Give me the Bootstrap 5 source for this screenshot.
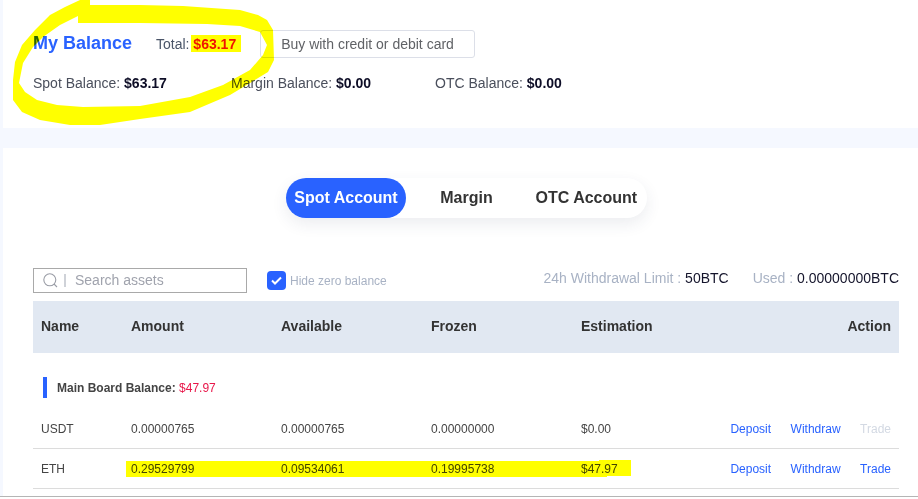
<!DOCTYPE html>
<html lang="en">
<head>
  <meta charset="UTF-8">
  <meta name="viewport" content="width=device-width, initial-scale=1.0">
  <title>My Balance</title>
  <link rel="stylesheet" href="https://cdn.jsdelivr.net/npm/bootstrap@5.3.2/dist/css/bootstrap.min.css">
  <style>
    html, body { height: 499px; overflow: hidden; }
    body { background: #f5f8ff; font-family: "Liberation Sans", Arial, sans-serif; color: #333; padding-left: 3px; position: relative; }
    .panel-top { background: #fff; height: 128px; padding: 30px 30px 0; }
    .panel-main { background: #fff; height: 348px; margin-top: 20px; padding: 30px 19px 0 30px; }
    .page-end { height: 3px; margin-left: -3px; background: #fff; border-top: 1px solid #b5b5b5; }
    .balance-title { color: #2962ff; font-size: 18px; font-weight: 700; line-height: 26px; margin: 0; width: 123px; }
    .total-label { font-size: 14px; color: #4a5568; width: 104px; padding-top: 4px; }
    .total-amount { color: #f01414; font-weight: 700; }
    .buy-btn { width: 215px; height: 28px; padding: 0; background: #fff; border: 1px solid #dcdfe8; border-radius: 3px; font-size: 14px; color: #606266; }
    .sub-row { margin-top: 17px; font-size: 14px; line-height: 16px; color: #4a4f5c; }
    .sub-row b { color: #0d0d26; }
    .sub-item { width: 198px; }
    .sub-item-wide { width: 204px; }
    .tab-switch { width: 361px; height: 40px; margin: 0 auto; border-radius: 20px; background: #fff; box-shadow: 0 6px 16px rgba(40, 50, 90, .09); font-size: 16px; font-weight: 700; color: #333; }
    .tab-on { width: 120px; height: 40px; border-radius: 20px; background: #2962ff; color: #fff; padding-left: 1px; }
    .tab-off { height: 40px; }
    .tab-margin { width: 120px; padding-left: 2px; margin-right: 10px; }
    .tool-row { margin-top: 50px; height: 25px; }
    .search-box { width: 214px; height: 25px; border: 1px solid #a9a9a9; color: #a0a3ad; font-size: 14px; padding-left: 9px; }
    .search-sep { width: 2px; height: 13px; background: #cfd2d8; margin: 0 9px 0 6px; }
    .check-box { width: 19px; height: 19px; border-radius: 4px; background: #2962ff; margin-left: 20px; margin-right: 4px; }
    .hide-label { font-size: 12px; color: #a8b2c4; }
    .limit-text { font-size: 14px; color: #a8b2c4; margin-top: -4px; }
    .limit-text span { color: #14142b; }
    .limit-gap { margin-left: 24px; }
    .asset-table { width: 866px; margin: 8px 0 0; font-size: 12px; table-layout: fixed; border-collapse: collapse; color: #444; }
    .asset-table th { background: #e1e8f2; height: 52px; font-size: 14px; font-weight: 700; color: #333; padding: 0 8px 2px; border: 0; }
    .asset-table td { padding: 2px 8px 0; height: 40px; border: 0; border-bottom: 1px solid #dcdcdc; vertical-align: middle; }
    .asset-table td.group-cell { height: 55px; border-bottom: 0; padding: 14px 10px 0; vertical-align: middle; }
    .group-bar { width: 4px; height: 21px; background: #2962ff; margin-right: 10px; }
    .group-label { font-weight: 700; color: #444; }
    .group-value { color: #e8174a; }
    .row-link { color: #2962ff; text-decoration: none; }
    .row-link + .row-link { margin-left: 19.5px; }
    .row-link.off { color: #d3d9e3; }
    .scribble { position: absolute; left: 0; top: 0; width: 918px; height: 499px; pointer-events: none; mix-blend-mode: multiply; }
  </style>
</head>
<body>

  <div class="panel-top">
    <div class="d-flex align-items-start">
      <h2 class="balance-title">My Balance</h2>
      <div class="total-label">Total: <span class="total-amount">$63.17</span></div>
      <button class="buy-btn" type="button">Buy with credit or debit card</button>
    </div>
    <div class="d-flex sub-row">
      <div class="sub-item">Spot Balance: <b>$63.17</b></div>
      <div class="sub-item-wide">Margin Balance: <b>$0.00</b></div>
      <div>OTC Balance: <b>$0.00</b></div>
    </div>
  </div>

  <div class="panel-main">
    <div class="tab-switch d-flex">
      <div class="tab-on d-flex align-items-center justify-content-center">Spot Account</div>
      <div class="tab-off tab-margin d-flex align-items-center justify-content-center">Margin</div>
      <div class="tab-off d-flex align-items-center">OTC Account</div>
    </div>

    <div class="tool-row d-flex align-items-center">
      <div class="search-box d-flex align-items-center">
        <svg width="15" height="15" viewBox="0 0 15 15" fill="none" stroke="#9a9da6" stroke-width="1.1"><circle cx="6.8" cy="6.8" r="6"/><path d="M11 11l3 3"/></svg>
        <span class="search-sep"></span>
        <span>Search assets</span>
      </div>
      <div class="check-box d-flex align-items-center justify-content-center">
        <svg width="11" height="9" viewBox="0 0 11 9" fill="none" stroke="#fff" stroke-width="2"><path d="M1 4.5l3 3 6-6"/></svg>
      </div>
      <span class="hide-label">Hide zero balance</span>
      <div class="limit-text ms-auto">24h Withdrawal Limit : <span>50BTC</span></div>
      <div class="limit-text limit-gap">Used : <span>0.00000000BTC</span></div>
    </div>

    <table class="asset-table">
      <colgroup>
        <col style="width: 90px">
        <col style="width: 150px">
        <col style="width: 150px">
        <col style="width: 150px">
        <col style="width: 130px">
        <col>
      </colgroup>
      <thead>
        <tr><th>Name</th><th>Amount</th><th>Available</th><th>Frozen</th><th>Estimation</th><th class="text-end">Action</th></tr>
      </thead>
      <tbody>
        <tr>
          <td colspan="6" class="group-cell">
            <div class="d-flex align-items-center"><span class="group-bar"></span><span class="group-label">Main Board Balance:&nbsp;</span><span class="group-value">$47.97</span></div>
          </td>
        </tr>
        <tr>
          <td>USDT</td><td>0.00000765</td><td>0.00000765</td><td>0.00000000</td><td>$0.00</td>
          <td class="text-end"><a class="row-link" href="#">Deposit</a><a class="row-link" href="#">Withdraw</a><a class="row-link off" href="#">Trade</a></td>
        </tr>
        <tr>
          <td>ETH</td><td>0.29529799</td><td>0.09534061</td><td>0.19995738</td><td>$47.97</td>
          <td class="text-end"><a class="row-link" href="#">Deposit</a><a class="row-link" href="#">Withdraw</a><a class="row-link" href="#">Trade</a></td>
        </tr>
      </tbody>
    </table>
  </div>
  <div class="page-end"></div>

  <svg class="scribble" viewBox="0 0 918 499">
    <path fill="#ffff00" fill-rule="evenodd" d="M80 0L90 0L90 5L140 5L183 6L240 10L258 15L267 20L273 30L274 60L268 72L250 83L230 95L190 112L140 119L100 125L70 125L40 120L22 112L13 100L13 80L15 62L22 45L35 30L50 15L65 7ZM78 16L78 23L140 23L207 24L240 26L260 32L267 45L263 55L250 70L223 85L190 97L140 106L83 107L57 105L37 100L25 92L19 83L23 63L33 47L43 37L60 25Z"/>
    <rect x="191" y="35" width="50" height="17" fill="#ffff00"/>
    <rect x="126" y="461" width="481" height="16" fill="#ffff00"/>
    <rect x="599" y="460" width="32" height="16" fill="#ffff00"/>
  </svg>

</body>
</html>
